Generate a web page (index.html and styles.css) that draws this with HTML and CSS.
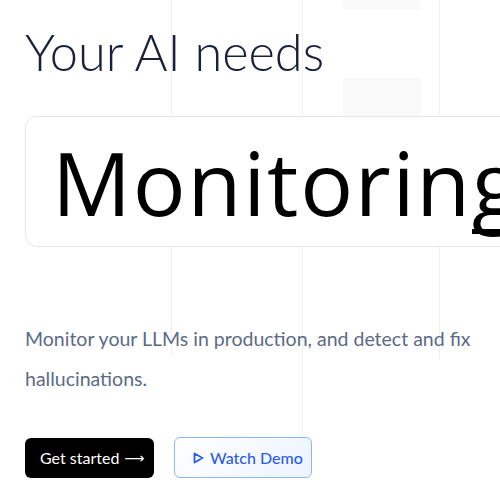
FILE: index.html
```html
<!DOCTYPE html>
<html lang="en">
<head>
<meta charset="utf-8">
<title>Your AI needs Monitoring</title>
<link rel="stylesheet" href="styles.css">
</head>
<body>
<main class="hero">
  <h1 class="title">Your AI needs</h1>
  <div class="word-card">
    <span class="word">Monitorin<span class="caret">g</span></span>
  </div>
  <p class="lead">Monitor your LLMs in production, and detect and fix hallucinations.</p>
  <div class="actions">
    <a class="btn btn-primary" href="#">Get started <span class="arrow">⟶</span></a>
    <a class="btn btn-demo" href="#">
      <svg class="play" width="11" height="12" viewBox="0 0 11 12"><path d="M1.5 1.5 L9.5 6 L1.5 10.5 Z" fill="none" stroke="currentColor" stroke-width="1.8" stroke-linejoin="round"/></svg>
      Watch Demo
    </a>
  </div>
</main>
</body>
</html>
```

FILE: styles.css
```css
html, body {
  margin: 0;
  padding: 0;
  overflow: hidden;
}
body {
  width: 500px;
  height: 502px;
  background-color: #ffffff;
  background-image:
    linear-gradient(#efefef, #efefef),
    linear-gradient(#efefef, #efefef),
    linear-gradient(#efefef, #efefef),
    linear-gradient(#fafafa, #fafafa),
    linear-gradient(#f9f9f9, #f9f9f9);
  background-repeat: no-repeat;
  background-position: 171px 0, 302px 0, 439px 0, 343px 0, 343px 78px;
  background-size: 1px 356px, 1px 437px, 1px 360px, 78px 10px, 78px 38px;
}
.hero {
  padding: 22px 0 0 25px;
  display: flex;
  flex-direction: column;
  align-items: flex-start;
}
.title {
  margin: 0;
  font-family: "Lato", sans-serif;
  font-weight: 300;
  font-size: 50.5px;
  line-height: 60px;
  color: #18203a;
}
.word-card {
  margin-top: 34px;
  width: 560px;
  height: 129px;
  border: 1px solid #e6e6e6;
  border-radius: 12px;
  background: #ffffff;
  display: flex;
  align-items: center;
  padding-left: 26px;
  white-space: nowrap;
}
.word {
  font-family: "Open Sans", sans-serif;
  font-weight: 400;
  font-size: 88px;
  line-height: 1;
  letter-spacing: 1.7px;
  color: #000000;
}
.caret {
  background-image: linear-gradient(#000000, #000000);
  background-repeat: no-repeat;
  background-position: 0 calc(100% - 8px);
  background-size: 100% 5px;
}
.lead {
  margin: 72px 0 0 0;
  width: 470px;
  font-family: "Lato", sans-serif;
  font-size: 19.5px;
  line-height: 39.5px;
  color: #5b6b86;
}
.actions {
  margin-top: 39px;
  display: flex;
  gap: 20px;
  align-items: center;
}
.btn {
  display: inline-flex;
  align-items: center;
  box-sizing: border-box;
  height: 40px;
  border-radius: 6px;
  font-family: "Lato", sans-serif;
  font-size: 16px;
  text-decoration: none;
}
.btn-primary {
  width: 129px;
  padding-left: 15px;
  background: #000000;
  color: #ffffff;
}
.arrow {
  margin-left: 5px;
  font-family: "DejaVu Sans", sans-serif;
  font-size: 14px;
}
.btn-demo {
  width: 138px;
  height: 41px;
  padding-left: 18px;
  gap: 6px;
  border: 1px solid #8fb6f4;
  background: linear-gradient(135deg, #ffffff 0%, #edf3fe 100%);
  color: #2a5ee8;
  font-weight: 500;
}
.play {
  display: block;
}
```
